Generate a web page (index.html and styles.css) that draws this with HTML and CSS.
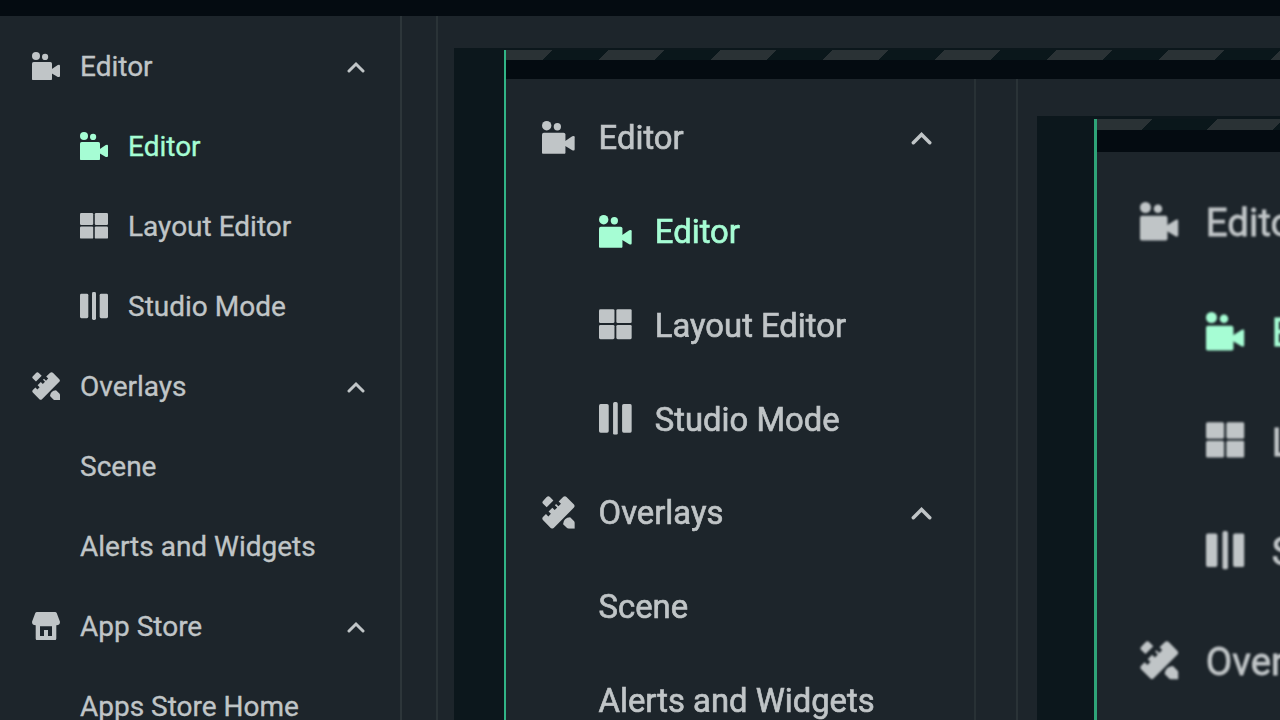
FILE: index.html
```html
<!DOCTYPE html>
<html lang="en">
<head>
    <meta charset="UTF-8">
    <meta name="viewport" content="width=device-width, initial-scale=1.0">
    <title>Editor</title>
    <link rel="stylesheet" href="styles.css">
</head>
<body>
    <!-- Shared icons -->
    <svg class="sprite" aria-hidden="true">
        <symbol id="camera" viewBox="0 0 28 28">
            <circle cx="4" cy="4" r="4"/>
            <circle cx="13.1" cy="4.9" r="3.1"/>
            <rect y="10" width="20" height="18.4" rx="1.6"/>
            <path d="M19.5 17.2 25.8 13.1Q28 12.2 28 13.8V24Q28 25.6 25.8 24.9L19.5 21.2z"/>
        </symbol>
        <symbol id="layout" viewBox="0 0 28 28">
            <rect y="1" width="13.2" height="11.9" rx="1.2"/>
            <rect x="14.8" y="1" width="13.2" height="11.9" rx="1.2"/>
            <rect y="14.4" width="13.2" height="12.2" rx="1.2"/>
            <rect x="14.8" y="14.4" width="13.2" height="12.2" rx="1.2"/>
        </symbol>
        <symbol id="studio" viewBox="0 0 28 28">
            <rect y="1.8" width="8.3" height="24.4" rx="1.4"/>
            <rect x="12" width="4" height="28" rx="1.4"/>
            <rect x="19.7" y="1.8" width="8.3" height="24.4" rx="1.4"/>
        </symbol>
        <symbol id="design" viewBox="0 0 28 28">
            <path d="M4 .9Q5.4-.4 6.8.9L9.7 3.8 4 9.5.9 6.6Q-.3 5.4.9 4.2z"/>
            <path d="M18.2.7Q19.6-.4 20.9.8L27.3 7.2Q28.5 8.5 27.3 9.8L10 27.2Q8.7 28.5 7.4 27.2L.8 20.5Q-.3 19.3.8 18L3.4 15.4 5.4 17.4 7.6 15.2 5.6 13.2 8.8 10 10.8 12 13 9.8 11 7.8 12 6.8 14 8.8 16.2 6.6 14.2 4.6z"/>
            <path d="M24 18.2 27.4 21.6Q28 22.2 28 23V28H23Q22 28 21.4 27.4L18 24Q18.4 18.6 24 18.2z"/>
        </symbol>
        <symbol id="store" viewBox="0 0 28 28">
            <path fill-rule="evenodd" d="M5 0H23Q24.2 0 24.7 1L27.9 9.5Q28.4 13.2 24.3 13.3V26.6Q24.3 28.3 22.6 28.3H5.4Q3.7 28.3 3.7 26.6V13.3Q-.4 13.2.1 9.5L3.3 1Q3.8 0 5 0zM8 14.2V24H12V18H16V24H20V14.2z"/>
        </symbol>
        <symbol id="chevron" viewBox="0 0 18 12">
            <path d="M2 10 9 3 16 10" fill="none" stroke="currentColor" stroke-width="3" stroke-linecap="round"/>
        </symbol>
    </svg>

    <div class="app">
        <div class="topbar"></div>
        <div class="main">
            <nav class="sidebar">
                <div class="item"><svg class="icon"><use href="#camera"/></svg><span class="label">Editor</span><svg class="chevron"><use href="#chevron"/></svg></div>
                <div class="item sub active"><svg class="icon"><use href="#camera"/></svg><span class="label">Editor</span></div>
                <div class="item sub"><svg class="icon"><use href="#layout"/></svg><span class="label">Layout Editor</span></div>
                <div class="item sub"><svg class="icon"><use href="#studio"/></svg><span class="label">Studio Mode</span></div>
                <div class="item"><svg class="icon"><use href="#design"/></svg><span class="label">Overlays</span><svg class="chevron"><use href="#chevron"/></svg></div>
                <div class="item sub"><span class="label">Scene</span></div>
                <div class="item sub"><span class="label">Alerts and Widgets</span></div>
                <div class="item"><svg class="icon"><use href="#store"/></svg><span class="label">App Store</span><svg class="chevron"><use href="#chevron"/></svg></div>
                <div class="item sub"><span class="label">Apps Store Home</span></div>
            </nav>
            <div class="gutter"></div>

            <!-- Preview of the captured display -->
            <div class="preview">
                <div class="display">
                    <div class="stripes"></div>
                    <div class="app capture">
                        <div class="topbar"></div>
                        <div class="main">
                            <nav class="sidebar">
                                <div class="item"><svg class="icon"><use href="#camera"/></svg><span class="label">Editor</span><svg class="chevron"><use href="#chevron"/></svg></div>
                                <div class="item sub active"><svg class="icon"><use href="#camera"/></svg><span class="label">Editor</span></div>
                                <div class="item sub"><svg class="icon"><use href="#layout"/></svg><span class="label">Layout Editor</span></div>
                                <div class="item sub"><svg class="icon"><use href="#studio"/></svg><span class="label">Studio Mode</span></div>
                                <div class="item"><svg class="icon"><use href="#design"/></svg><span class="label">Overlays</span><svg class="chevron"><use href="#chevron"/></svg></div>
                                <div class="item sub"><span class="label">Scene</span></div>
                                <div class="item sub"><span class="label">Alerts and Widgets</span></div>
                            </nav>
                            <div class="gutter"></div>
                            <div class="preview">
                                <div class="display">
                                    <div class="stripes"></div>
                                    <div class="app capture">
                                        <div class="topbar"></div>
                                        <div class="main">
                                            <nav class="sidebar">
                                                <div class="item"><svg class="icon"><use href="#camera"/></svg><span class="label">Editor</span></div>
                                                <div class="item sub active"><svg class="icon"><use href="#camera"/></svg><span class="label">Editor</span></div>
                                                <div class="item sub"><svg class="icon"><use href="#layout"/></svg><span class="label">Layout Editor</span></div>
                                                <div class="item sub"><svg class="icon"><use href="#studio"/></svg><span class="label">Studio Mode</span></div>
                                                <div class="item"><svg class="icon"><use href="#design"/></svg><span class="label">Overlays</span></div>
                                            </nav>
                                        </div>
                                    </div>
                                </div>
                            </div>
                        </div>
                    </div>
                </div>
            </div>
        </div>
    </div>
</body>
</html>
```
FILE: styles.css
```css
* {
    box-sizing: border-box;
}

body {
    margin: 0;
    height: 100vh;
    overflow: hidden;
    background-color: #1d252b;
    font-family: Roboto, sans-serif;
    font-size: 10px; /* every size below is in em, so a capture scales as a whole */
}

.sprite {
    display: none;
}

.app {
    display: flex;
    flex-direction: column;
    height: 100vh;
    background-color: #1d252b;
    color: #c0c5c7;
}

.topbar {
    flex: none;
    height: 1.6em;
    background-color: #040b11;
}

.main {
    display: flex;
    flex: 1;
    min-height: 0;
}

/* Sidebar */
.sidebar {
    flex: none;
    width: 40.2em;
    padding-top: 1em;
    border-right: 0.2em solid #2d363a;
    overflow: hidden;
}

.item {
    display: flex;
    align-items: center;
    height: 8em;
    padding: 0 3.5em 0 3.2em;
}

.sub {
    padding-left: 8em;
}

.active {
    color: #a6fdd4;
}

.icon {
    width: 2.8em;
    height: 2.8em;
    margin-right: 2em;
    fill: currentColor;
    overflow: visible;
}

.label {
    padding-top: 0.07em;
    font-size: 2.8em;
    white-space: nowrap;
    -webkit-text-stroke: 0.012em currentColor;
}

.chevron {
    width: 1.8em;
    height: 1.2em;
    margin-top: 0.1em;
    margin-left: auto;
}

.gutter {
    flex: none;
    width: 3.6em;
    border-right: 0.2em solid #2a3337;
}

/* Preview area */
.preview {
    display: flex;
    flex: 1;
    min-width: 0;
    margin: 3.2em 0 0 1.6em;
    padding: 0.2em 0 0 5em;
    background-color: #0c171c;
    overflow: hidden;
}

.display {
    flex: 1;
    min-width: 0;
    border-left: 0.2em solid #31b486;
    overflow: hidden;
}

.stripes {
    height: 1em;
    background: repeating-linear-gradient(135deg, #2a3235 0 3.32em, #0a171b 3.32em 7.28em, #2a3235 7.28em 7.92em);
}

/* A capture is the same window, enlarged */
.capture {
    font-size: 1.172em;
}

.capture .sidebar {
    width: 40.1em;
    border-color: #283135;
}

.capture .item {
    margin: 0 0.1em 0 -0.1em;
    filter: blur(0.6px);
}

.capture .label {
    -webkit-text-stroke-width: 0.02em;
}

.capture .capture .item {
    filter: blur(0.8px);
}

.capture .display {
    border-color: #2fa478;
    border-left-width: 0.3em;
}

.capture .preview {
    padding-left: 4.9em;
}
```
